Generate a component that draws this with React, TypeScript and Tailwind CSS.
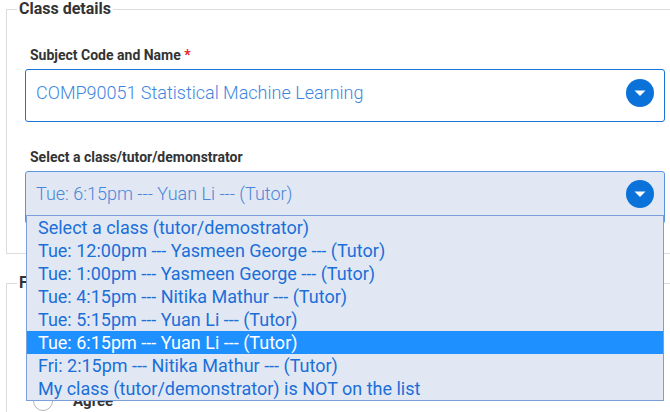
import React from "react";

const classes = [
  "Select a class (tutor/demostrator)",
  "Tue: 12:00pm --- Yasmeen George --- (Tutor)",
  "Tue: 1:00pm --- Yasmeen George --- (Tutor)",
  "Tue: 4:15pm --- Nitika Mathur --- (Tutor)",
  "Tue: 5:15pm --- Yuan Li --- (Tutor)",
  "Tue: 6:15pm --- Yuan Li --- (Tutor)",
  "Fri: 2:15pm --- Nitika Mathur --- (Tutor)",
  "My class (tutor/demonstrator) is NOT on the list",
];

function ArrowCircle() {
  return (
    <svg width="28" height="28" viewBox="0 0 28 28" className="shrink-0">
      <circle cx="14" cy="14" r="14" fill="#0b72d9" />
      <path d="M8.5 11.5 L19.5 11.5 L14 17 Z" fill="#ffffff" />
    </svg>
  );
}

export default function App() {
  const selected = 5;

  return (
    <div
      className="w-[670px] h-[412px] overflow-hidden bg-white pl-[6px]"
      style={{ fontFamily: "Roboto, 'Liberation Sans', sans-serif" }}
    >
      {/* class details */}
      <fieldset className="w-[690px] border border-[#dcdcdc] px-[18px] pb-[29px]">
        <legend className="-ml-[8px] px-[2px] text-[16px] leading-[18px] font-bold text-[#333333]">
          Class details
        </legend>
        <div className="pt-[29px]">
          <label className="block ml-[5px] mb-[6px] text-[14px] leading-[16px] font-bold text-[#333333]">
            Subject Code and Name <span className="text-[#e8202a]">*</span>
          </label>
          <div className="w-[640px] h-[53px] flex items-center justify-between pl-[10px] pr-[10px] border border-[#1a73d8] rounded-[3px] bg-white">
            <span className="text-[18px] font-light text-[#3d86e0] -mt-[6px]">
              COMP90051 Statistical Machine Learning
            </span>
            <span className="-mt-[6px]">
              <ArrowCircle />
            </span>
          </div>

          <label className="block ml-[5px] mt-[27px] mb-[6px] text-[14px] leading-[16px] font-bold text-[#333333]">
            Select a class/tutor/demonstrator
          </label>
          <div className="relative w-[640px]">
            <div className="h-[53px] flex items-start justify-between pl-[10px] pr-[10px] pt-[8px] border border-[#5b95e0] rounded-[3px] bg-[#e1e8f4]">
              <span className="text-[18px] leading-[28px] font-light text-[#4a86d8]">
                {classes[selected]}
              </span>
              <ArrowCircle />
            </div>

            {/* open dropdown list */}
            <ul className="absolute left-[1px] top-[44px] w-[638px] border border-[#7b9fd8] bg-[#e1e8f4] z-10">
              {classes.map((c, i) => (
                <li
                  key={c}
                  className={`h-[23px] px-[11px] text-[18px] leading-[23px] whitespace-nowrap ${
                    i === selected
                      ? "bg-[#1e90ff] text-white"
                      : "text-[#1b6fd8]"
                  }`}
                >
                  {c}
                </li>
              ))}
            </ul>
          </div>
        </div>
      </fieldset>

      {/* feedback, mostly behind the list */}
      <fieldset className="mt-[20px] w-[690px] border border-[#dcdcdc] px-[18px] pb-[20px]">
        <legend className="-ml-[8px] px-[2px] text-[16px] leading-[18px] font-bold text-[#333333]">
          Feedback
        </legend>
        <div className="pt-[98px] flex items-center gap-[20px] ml-[8px]">
          <span className="w-[20px] h-[20px] rounded-full border border-[#b5b5b5] bg-white" />
          <span className="text-[15px] font-bold text-[#333333]">Agree</span>
        </div>
      </fieldset>
    </div>
  );
}
